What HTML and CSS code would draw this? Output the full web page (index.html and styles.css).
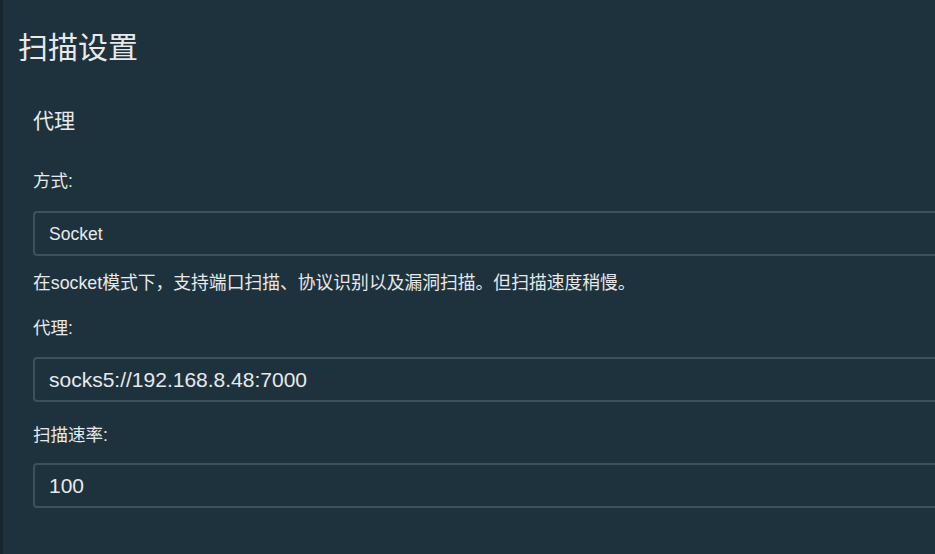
FILE: index.html
```html
<!DOCTYPE html>
<html lang="zh-CN">
<head>
<meta charset="utf-8">
<title>扫描设置</title>
<link rel="stylesheet" href="styles.css">
</head>
<body>
<div class="page">
  <h1 class="title">扫描设置</h1>
  <div class="section">
    <h2 class="section-title">代理</h2>
    <label class="label label-first">方式:</label>
    <select class="control control-select">
      <option>Socket</option>
    </select>
    <p class="help">在socket模式下，支持端口扫描、协议识别以及漏洞扫描。但扫描速度稍慢。</p>
    <label class="label label-second">代理:</label>
    <input class="control control-input" type="text" value="socks5://192.168.8.48:7000">
    <label class="label label-third">扫描速率:</label>
    <input class="control control-input" type="text" value="100">
  </div>
</div>
</body>
</html>
```
FILE: styles.css
```css
html, body {
  margin: 0;
  padding: 0;
  background: #1e323d;
  overflow: hidden;
  height: 554px;
}
body {
  font-family: "Liberation Sans", "Noto Sans CJK SC", sans-serif;
  color: #e8e9ea;
}
.page {
  border-left: 3px solid #17262e;
  padding-left: 15px;
  min-height: 554px;
  box-sizing: border-box;
}
.title {
  margin: 0;
  padding-top: 30px;
  font-size: 30px;
  line-height: 36px;
  font-weight: normal;
}
.section {
  padding-left: 15px;
  display: flex;
  flex-direction: column;
  align-items: stretch;
}
.section-title {
  margin: 42px 0 0;
  font-size: 21px;
  line-height: 26px;
  font-weight: normal;
}
.label {
  display: block;
  font-size: 17.5px;
  line-height: 25px;
}
.label-first { margin-top: 34.5px; margin-bottom: 17.5px; }
.label-second { margin-top: 20px; margin-bottom: 16.5px; }
.label-third { margin-top: 20.5px; margin-bottom: 15.5px; }
.control {
  box-sizing: border-box;
  width: 100%;
  height: 45px;
  margin: 0;
  padding: 0 14px;
  border: 2px solid #3e505a;
  border-right: none;
  border-radius: 4px 0 0 4px;
  background: #1e323d;
  color: #e8e9ea;
  font-family: "Liberation Sans", "Noto Sans CJK SC", sans-serif;
  outline: none;
}
.control-select {
  -webkit-appearance: none;
  appearance: none;
  font-size: 17.5px;
}
.control-input {
  font-size: 21px;
}
.help {
  margin: 14.5px 0 0;
  font-size: 17.8px;
  line-height: 25px;
}
```
